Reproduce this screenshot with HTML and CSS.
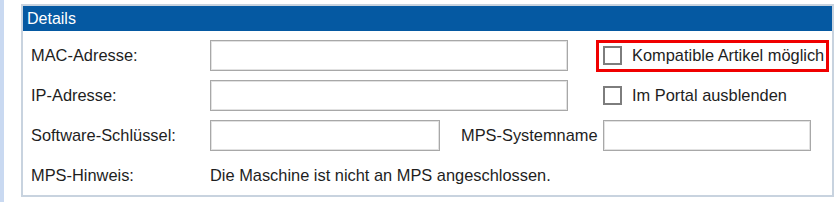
FILE: index.html
```html
<!DOCTYPE html>
<html lang="de">
<head>
    <meta charset="UTF-8">
    <meta name="viewport" content="width=device-width, initial-scale=1.0">
    <title>Details</title>
    <link rel="stylesheet" href="styles.css">
</head>
<body>
    <div class="page">
        <div class="panel">
            <div class="panel-header">Details</div>
            <div class="panel-body">
                <div class="row">
                    <label class="row-label" for="mac">MAC-Adresse:</label>
                    <input type="text" id="mac" class="field field-wide">
                    <label class="check-item highlight">
                        <input type="checkbox" id="kompatibel" class="check">
                        <span>Kompatible Artikel möglich</span>
                    </label>
                </div>
                <div class="row">
                    <label class="row-label" for="ip">IP-Adresse:</label>
                    <input type="text" id="ip" class="field field-wide">
                    <label class="check-item">
                        <input type="checkbox" id="portal" class="check">
                        <span>Im Portal ausblenden</span>
                    </label>
                </div>
                <div class="row">
                    <label class="row-label" for="key">Software-Schlüssel:</label>
                    <input type="text" id="key" class="field field-short">
                    <label class="inline-label" for="mpsname">MPS-Systemname</label>
                    <input type="text" id="mpsname" class="field field-name">
                </div>
                <div class="row">
                    <span class="row-label">MPS-Hinweis:</span>
                    <span class="note">Die Maschine ist nicht an MPS angeschlossen.</span>
                </div>
            </div>
        </div>
    </div>
</body>
</html>
```

FILE: styles.css
```css
body {
    font-family: "Liberation Sans", Arial, sans-serif;
    font-size: 16.4px;
    color: #1e1e1e;
    margin: 0;
    background-color: white;
}
.page {
    border-left: 4px solid #c9d9f1;
    height: 202px;
    box-sizing: border-box;
    padding: 4px 0 0 17px;
}
.panel {
    width: 813px;
    height: 193px;
    border: 2px solid #c8d3df;
    box-sizing: border-box;
}
.panel-header {
    background-color: #0559a2;
    color: white;
    font-size: 16px;
    height: 25px;
    line-height: 25px;
    padding-left: 4px;
}
.panel-body {
    padding: 9px 0 0 8px;
    display: flex;
    flex-direction: column;
    gap: 9px;
}
.row {
    display: flex;
    align-items: center;
    height: 31px;
}
.row-label {
    width: 179px;
    flex-shrink: 0;
}
.field {
    height: 31px;
    border: 1px solid #a8a8a8;
    box-shadow: inset 0 0 0 1px #e2e2e2;
    box-sizing: border-box;
    padding: 0 4px;
    font: inherit;
    margin: 0;
    outline: none;
}
.field-wide {
    width: 358px;
}
.field-short {
    width: 230px;
}
.field-name {
    width: 208px;
}
.inline-label {
    margin-left: 21px;
    width: 142px;
}
.check-item {
    display: flex;
    align-items: center;
    gap: 10px;
    width: 233px;
    height: 32px;
    margin-left: 28px;
    padding-left: 4px;
    border: 3px solid transparent;
    box-sizing: border-box;
    white-space: nowrap;
}
.highlight {
    border-color: #f00000;
}
.check {
    appearance: none;
    width: 19px;
    height: 19px;
    margin: 0;
    border: 2px solid #7d7d7d;
    background: white;
    flex-shrink: 0;
}
.note {
    white-space: nowrap;
}
```
